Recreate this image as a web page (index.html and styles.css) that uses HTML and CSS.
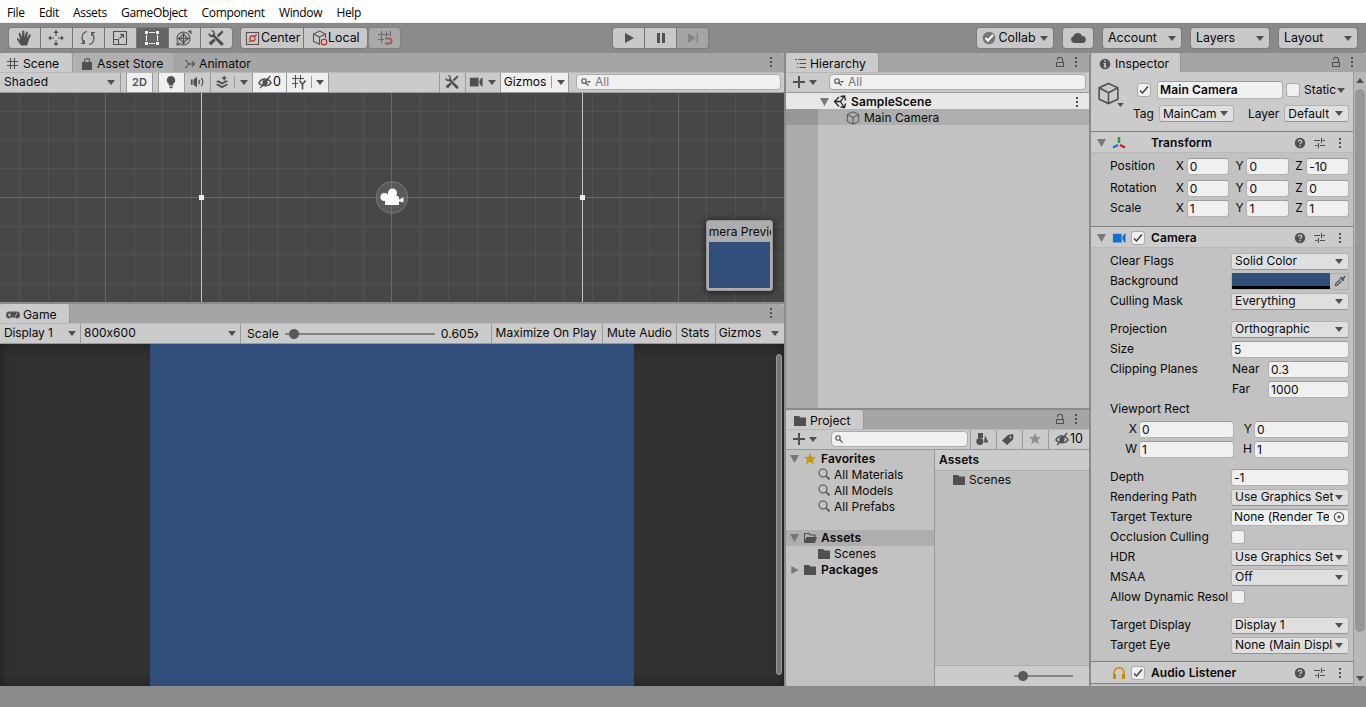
FILE: index.html
```
<!DOCTYPE html>
<html lang="en">
<head>
    <meta charset="UTF-8">
    <meta name="viewport" content="width=device-width, initial-scale=1.0">
    <title>SampleScene - Unity Editor</title>
    <link rel="stylesheet" href="styles.css">
</head>
<body>
    <!-- Icons -->
    <svg class="sprite">
        <symbol id="hand" viewBox="0 0 16 16"><path d="M5 15.500 1 9.500c-.6-1 .8-1.800 1.600-.8L4.200 10.500 2.800 4c-.2-1.300 1.500-1.600 1.900-.3L6 7.500 6.200 1.500c0-1.400 2-1.400 2.100 0l.3 5.500L9.900 2.200c.3-1.300 2.100-.9 1.900.5L11 8l2-3.300c.7-1.100 2.100-.3 1.600 1L12.500 11c-.4 1.600-.8 3-1.500 4.500z"/></symbol>
        <symbol id="move" viewBox="0 0 16 16"><path d="M8 0l2.500 3H5.500zM8 16l2.500-3H5.500zM0 8l3-2.500v5zM16 8l-3-2.500v5z"/><path class="ln" d="M8 3v3M8 10v3M3 8h3M10 8h3"/></symbol>
        <symbol id="rotate" viewBox="0 0 16 16"><path class="ln" d="M7 1.500C2 2.500.500 8.500 3.800 13.200M1 13.500h3.300v-3.500M9 14.500c5-1 6.500-7 3.200-11.700M15 2.500h-3.300V6"/></symbol>
        <symbol id="scale" viewBox="0 0 16 16"><path class="ln" d="M1.500 1.500h13v13h-13zM1.500 9.500h5v5M7.500 8.500l4-4M8 4.500h3.500V8"/></symbol>
        <symbol id="rect" viewBox="0 0 16 16"><path d="M1 1h3v3H1zM12 1h3v3h-3zM1 12h3v3H1zM12 12h3v3h-3z"/><path class="ln" d="M5 2.500h6M5 13.500h6M2.500 5v6M13.500 5v6"/></symbol>
        <symbol id="trans" viewBox="0 0 16 16"><circle class="ln" cx="7.500" cy="8.500" r="6.500"/><path class="ln" d="M7.500 3v11M2 8.500h11M5 6h5v5H5z"/><path d="M7.500 2.500l2 2.500h-4zM7.500 14.500l2-2.500h-4zM1.500 8.500l2.500-2v4zM13.500 8.500l-2.500-2v4zM11.500.500h4v4zM.500 12v3.500H4z"/></symbol>
        <symbol id="tools" viewBox="0 0 16 16"><path d="M3 0.500 5.800 3 3.500 5.300.500 3C0 6 2.500 7.800 5.200 7l7.600 8.300c1.600 1 3.400-.8 2.300-2.300L7 5.200C7.500 2 5.500-.2 3 .500z"/><path d="M14 .500l1.500 1.500-4.800 5.200-1.900-1.900zM6 8.500l1.800 1.800-4.600 5.200-2.700-2.700z"/></symbol>
        <symbol id="pivot" viewBox="0 0 16 16"><path class="ln" d="M1.500 1.500h13v13h-13z"/><path class="ln red" d="M4 12l2-2M10 6l2.500-2.500"/><circle class="ln red" cx="8" cy="8" r="2.800"/></symbol>
        <symbol id="cube" viewBox="0 0 16 16"><path class="ln" d="M8 1 14.500 4v8L8 15 1.500 12V4zM1.500 4 8 7.500 14.500 4M8 7.500V15"/></symbol>
        <symbol id="local" viewBox="0 0 16 16"><path class="ln" d="M8 14.500 1.500 11.500V4L7.500 1 13.500 4v4M1.500 4l6 3 6-3M7.500 7v7"/><circle class="ln red" cx="12" cy="12" r="2.800"/></symbol>
        <symbol id="snap" viewBox="0 0 16 16"><path class="ln" d="M4.500 1v12M9.500 1v6M1 4.500h13M1 9.500h6M13.500 1v5"/><path class="magnet" d="M8 8.500h4a2.500 2.500 0 0 1 0 5H8"/></symbol>
        <symbol id="gridy" viewBox="0 0 16 16"><path class="ln" d="M4.500 1v13M9.500 1v5M1 4.500h12M1 9.500h6"/><path class="ln bold" d="M8.500 6.500l3 4 3-4M11.500 10.500v5"/></symbol>
        <symbol id="grid" viewBox="0 0 12 12"><path class="ln" d="M3.500 0v11M7.500 0v11M0 3.500h11M0 7.500h11"/></symbol>
        <symbol id="bag" viewBox="0 0 12 12"><path d="M1 4h10v8H1z"/><path class="ln" d="M3.500 5V2.500c0-2.500 5-2.500 5 0V5"/></symbol>
        <symbol id="anim" viewBox="0 0 12 12"><path class="ln" d="M1 2c2 0 2 4 5 4h5M1 10c2 0 2-4 5-4M8 3.500 10.500 6 8 8.500"/></symbol>
        <symbol id="bulb" viewBox="0 0 16 16"><path d="M8 1a4.800 4.800 0 0 0-2.600 8.800V12h5.200V9.800A4.800 4.800 0 0 0 8 1zM6 13h4v1l-1 1H7l-1-1z"/></symbol>
        <symbol id="sound" viewBox="0 0 16 16"><path d="M1 5h2v6H1zM4 5l4-3v12l-4-3z"/><path class="ln bold" d="M10 5.500c1 1.500 1 3.500 0 5M13 3.500c2 2.500 2 6.500 0 9"/></symbol>
        <symbol id="fx" viewBox="0 0 16 16"><path d="M1 7.500 4 6l4 2.500 5-2.500 2 1-7 3.800zM1 11l2-1 5 2.500 5.500-2.500 1.500 1-7 4zM10.500 0l1 2.500 2.500 1-2.500 1-1 2.500-1-2.500-2.500-1 2.500-1z"/></symbol>
        <symbol id="eye" viewBox="0 0 16 16"><path class="ln bold" d="M1 9c3-6 11-6 14 0-3 4.500-11 4.500-14 0zM2.500 15 14 1"/><circle cx="8" cy="8.500" r="3"/></symbol>
        <symbol id="cam" viewBox="0 0 16 16"><path d="M1 3h10v10H1zM12 6l2.500-3h1v10h-1L12 10z"/></symbol>
        <symbol id="down" viewBox="0 0 8 5"><path d="M0 0h8L4 5z"/></symbol>
        <symbol id="fold" viewBox="0 0 9 8"><path d="M0 0h9L4.500 8z"/></symbol>
        <symbol id="right" viewBox="0 0 9 9"><path d="M1 0v9l8-4.500z"/></symbol>
        <symbol id="dots" viewBox="0 0 4 12"><path d="M1 1h2v2H1zM1 5h2v2H1zM1 9h2v2H1z"/></symbol>
        <symbol id="lock" viewBox="0 0 10 12"><path class="ln" d="M1.500 6.500h7v4h-7zM2.500 4V3.500c0-3 5-3 5 0v3"/></symbol>
        <symbol id="search" viewBox="0 0 12 12"><circle class="ln" cx="5" cy="5" r="4"/><path class="ln bold" d="M8 8l3.500 3.500"/></symbol>
        <symbol id="lens" viewBox="0 0 8 8"><circle class="ln" cx="3" cy="3" r="2.200"/><path class="ln" d="M4.500 4.500l3 3"/></symbol>
        <symbol id="searchd" viewBox="0 0 12 10"><circle class="ln" cx="4" cy="4" r="2.300"/><path class="ln" d="M5.500 5.500l3 3"/><path d="M7 4h4L9 6z"/></symbol>
        <symbol id="play" viewBox="0 0 16 16"><path d="M4 3v10l9-5z"/></symbol>
        <symbol id="pause" viewBox="0 0 16 16"><path d="M4 3h3v10H4zM9 3h3v10H9z"/></symbol>
        <symbol id="step" viewBox="0 0 16 16"><path d="M3 3v10l7.500-5zM11.500 3H13v10h-1.500z"/></symbol>
        <symbol id="check" viewBox="0 0 12 12"><path class="tick" d="M2 6.500 4.500 9 10 2.500"/></symbol>
        <symbol id="collab" viewBox="0 0 14 14"><circle cx="7" cy="7" r="6.300" fill="#777"/><path d="M3.500 7 6 9.500 11 4" fill="none" stroke="#fff" stroke-width="2"/></symbol>
        <symbol id="cloud" viewBox="0 0 16 12"><path d="M4 11a3.500 3.500 0 0 1-.5-6.800A4.500 4.500 0 0 1 12 4a3.500 3.500 0 0 1 .5 7z"/></symbol>
        <symbol id="list" viewBox="0 0 12 12"><path class="ln" d="M0 1.500h2M3.500 1.500H11M2 5.500h1M4.500 5.500H11M2 9.500h1M4.500 9.500H11"/></symbol>
        <symbol id="plus" viewBox="0 0 12 12"><path d="M5 0h2v5h5v2H7v5H5V7H0V5h5z"/></symbol>
        <symbol id="unity" viewBox="0 0 14 14"><path class="ln dark" d="M6 2 1.500 6.500 6 11.500M1.500 6.500h6M7.500 1.500l4-.5 1 4.500M7.500 12l4 .5 1-4M11 1.500l-3.500 5L11 12"/></symbol>
        <symbol id="info" viewBox="0 0 12 12"><circle cx="6" cy="6" r="5.300"/><path d="M5.200 2.200h1.700v1.600H5.200zM4.500 5h2.400v3.500h.8v1H4.500v-1h.7V6h-.7z" fill="#cbcbcb"/></symbol>
        <symbol id="help" viewBox="0 0 12 12"><circle cx="6" cy="6" r="5.200"/><path d="M4.300 4.700c0-2.200 3.500-2 3.500 0C7.800 5.800 6 5.800 6 7.200M6 8.200v1.300" fill="none" stroke="#cbcbcb" stroke-width="1.300"/></symbol>
        <symbol id="preset" viewBox="0 0 12 12"><path class="ln" d="M0 3.500h6M8.500 3.500H11M7.500 1v5M1 8.500h2.500M6 8.500h5M4.500 6v5"/></symbol>
        <symbol id="axes" viewBox="0 0 14 14"><path d="M7 1v6" stroke="#2e9637" stroke-width="2.500"/><path d="M6 9 1 11.500" stroke="#1573e6" stroke-width="2.500"/><path d="M8 9l5 2.500" stroke="#d11919" stroke-width="2.500"/></symbol>
        <symbol id="phones" viewBox="0 0 14 14"><path d="M2 12V7c0-7 10-7 10 0v5" fill="none" stroke="#c98a00" stroke-width="1.500"/><path d="M1 8h3v5H1zM10 8h3v5h-3z" fill="#c98a00"/></symbol>
        <symbol id="pick" viewBox="0 0 12 12"><path d="M7 1.500 8.500 3 10 1c1-.8 2 .5 1.300 1.200L9.500 4l1 1-1.500 1.300L5.800 3z"/><path class="ln" d="M6 4.500 1.500 9v1.500H3L7.500 6"/></symbol>
        <symbol id="target" viewBox="0 0 12 12"><circle class="ln" cx="6" cy="6" r="4.700"/><circle cx="6" cy="6" r="1.500"/></symbol>
        <symbol id="folder" viewBox="0 0 14 12"><path d="M1 1h5l1.500 1.500H13v8.500H1z"/></symbol>
        <symbol id="folder-open" viewBox="0 0 14 12"><path class="ln" d="M1.500 10V1.500H6L7.500 3H12v2"/><path d="M3.500 5H14l-2 6H1z"/></symbol>
        <symbol id="star" viewBox="0 0 12 12"><path d="M6 0l1.700 4H12L8.700 6.800 9.900 11.500 6 8.800 2.100 11.500 3.300 6.800 0 4h4.300z"/></symbol>
        <symbol id="shapes" viewBox="0 0 14 14"><path d="M3 1h5v5H3zM10 3.500l3.500 7H9z"/><circle cx="4.800" cy="9.500" r="3.500"/></symbol>
        <symbol id="tag" viewBox="0 0 12 12"><path fill-rule="evenodd" d="M6 2l4.500-1 1 1L11 6.500 5 12 0 7.500zM8.300 3.200a1 1 0 1 0 .1 0z"/></symbol>
        <symbol id="pad" viewBox="0 0 14 8"><path fill-rule="evenodd" d="M3.500.500h7a3.500 3.500 0 0 1 0 7L9 6.500H5L3.500 7.500a3.500 3.500 0 0 1 0-7zM3 2.500v1H2v1h1v1h1v-1h1v-1H4v-1zM11 2h-1v1.500h1zM10 4.500H9v1h1z"/></symbol>
        <symbol id="movie" viewBox="0 0 24 18"><circle cx="4.500" cy="9" r="4"/><circle cx="12.500" cy="5" r="4.500"/><path d="M4 9h1l4-3 9 2 1 2v7H5v-3.500zM18 12l5.500-2.500v5L18 13z"/></symbol>
    </svg>

    <nav class="menu">
        <span>File</span><span>Edit</span><span>Assets</span><span>GameObject</span><span>Component</span><span>Window</span><span>Help</span>
    </nav>

    <header class="toolbar">
        <div class="btn-group tools">
            <button><svg><use href="#hand"/></svg></button>
            <button><svg><use href="#move"/></svg></button>
            <button><svg><use href="#rotate"/></svg></button>
            <button><svg><use href="#scale"/></svg></button>
            <button class="selected"><svg><use href="#rect"/></svg></button>
            <button><svg><use href="#trans"/></svg></button>
            <button><svg><use href="#tools"/></svg></button>
        </div>
        <div class="btn-group handles">
            <button><svg><use href="#pivot"/></svg>Center</button>
            <button><svg><use href="#local"/></svg>Local</button>
        </div>
        <div class="btn-group disabled"><button><svg><use href="#snap"/></svg></button></div>
        <div class="btn-group player">
            <button><svg><use href="#play"/></svg></button>
            <button><svg><use href="#pause"/></svg></button>
            <button class="off"><svg><use href="#step"/></svg></button>
        </div>
        <div class="account">
            <button class="collab"><svg class="s14"><use href="#collab"/></svg>Collab<svg class="arrow"><use href="#down"/></svg></button>
            <button class="cloud"><svg><use href="#cloud"/></svg></button>
            <button class="drop">Account<svg class="arrow"><use href="#down"/></svg></button>
            <button class="drop">Layers<svg class="arrow"><use href="#down"/></svg></button>
            <button class="drop">Layout<svg class="arrow"><use href="#down"/></svg></button>
        </div>
    </header>

    <main class="editor">
        <div class="column left">
            <!-- Scene -->
            <section class="panel scene">
                <div class="tabs">
                    <div class="tab active tab-scene"><svg class="s12"><use href="#grid"/></svg>Scene</div>
                    <div class="tab tab-store"><svg class="s12"><use href="#bag"/></svg>Asset Store</div>
                    <div class="tab tab-anim"><svg class="s12"><use href="#anim"/></svg>Animator</div>
                    <div class="tab-tools"><svg class="dots"><use href="#dots"/></svg></div>
                </div>
                <div class="bar">
                    <div class="cell shaded">Shaded<svg class="arrow"><use href="#down"/></svg></div>
                    <div class="cell on two-d">2D</div>
                    <div class="cell on light"><svg class="s14"><use href="#bulb"/></svg></div>
                    <div class="cell audio"><svg class="s14"><use href="#sound"/></svg></div>
                    <div class="cell effects"><svg class="s14"><use href="#fx"/></svg><i></i><svg class="arrow"><use href="#down"/></svg></div>
                    <div class="cell on hidden-count"><svg class="s14"><use href="#eye"/></svg>0</div>
                    <div class="cell on grid-axis"><svg><use href="#gridy"/></svg><i></i><svg class="arrow"><use href="#down"/></svg></div>
                    <div class="cell scene-tools"><svg class="s14"><use href="#tools"/></svg></div>
                    <div class="cell scene-cam"><svg class="s14"><use href="#cam"/></svg><svg class="arrow"><use href="#down"/></svg></div>
                    <div class="cell on gizmos">Gizmos<i></i><svg class="arrow"><use href="#down"/></svg></div>
                    <div class="search"><svg class="lens"><use href="#searchd"/></svg>All</div>
                </div>
                <div class="scene-view">
                    <svg class="scene-grid" viewBox="0 0 784 209">
                        <!-- minor lines, then every tenth line -->
                        <path d="M19.500 0v209M48.500 0v209M76.500 0v209M134.500 0v209M162.500 0v209M191.500 0v209M219.500 0v209M248.500 0v209M277.500 0v209M305.500 0v209M334.500 0v209M363.500 0v209M420.500 0v209M448.500 0v209M477.500 0v209M506.500 0v209M535.500 0v209M563.500 0v209M592.500 0v209M620.500 0v209M649.500 0v209M706.500 0v209M735.500 0v209M764.500 0v209M0 18.500h784M0 47.500h784M0 75.500h784M0 133.500h784M0 161.500h784M0 190.500h784" stroke="#525252" fill="none"/>
                        <path d="M105.500 0v209M391.500 0v209M678.500 0v209M0 104.500h784" stroke="#6a6a6a" fill="none"/>
                        <path d="M201.500 0v209M582.500 0v209" stroke="#c4c4c4" fill="none"/>
                        <path d="M199 102h5v5h-5zM580 102h5v5h-5z" fill="#eee"/>
                        <circle cx="392" cy="104.500" r="15.800" fill="#888" fill-opacity=".3" stroke="#777"/>
                        <use href="#movie" x="380" y="95" width="24" height="18" fill="#fff"/>
                    </svg>
                    <div class="preview"><div class="preview-title"><span>Camera Preview</span></div><div class="preview-image"></div></div>
                </div>
            </section>

            <!-- Game -->
            <section class="panel game">
                <div class="tabs">
                    <div class="tab active tab-game"><svg class="pad"><use href="#pad"/></svg>Game</div>
                    <div class="tab-tools"><svg class="dots"><use href="#dots"/></svg></div>
                </div>
                <div class="bar">
                    <div class="cell display">Display 1<svg class="arrow"><use href="#down"/></svg></div>
                    <div class="cell size">800x600<svg class="arrow"><use href="#down"/></svg></div>
                    <div class="cell zoom">Scale<div class="slider"></div><span>0.605x</span></div>
                    <div class="cell maximize">Maximize On Play</div>
                    <div class="cell mute">Mute Audio</div>
                    <div class="cell stats">Stats</div>
                    <div class="cell game-gizmos">Gizmos<i></i><svg class="arrow"><use href="#down"/></svg></div>
                </div>
                <div class="game-view"><div class="game-image"></div><div class="game-scroll"></div></div>
            </section>
        </div>

        <div class="column middle">
            <!-- Hierarchy -->
            <section class="panel hierarchy">
                <div class="tabs">
                    <div class="tab active tab-hierarchy"><svg class="s12"><use href="#list"/></svg>Hierarchy</div>
                    <div class="tab-tools"><svg class="lock"><use href="#lock"/></svg><svg class="dots"><use href="#dots"/></svg></div>
                </div>
                <div class="bar">
                    <div class="add"><svg class="s12"><use href="#plus"/></svg><svg class="arrow"><use href="#down"/></svg></div>
                    <div class="search"><svg class="lens"><use href="#searchd"/></svg>All</div>
                </div>
                <div class="hierarchy-body">
                    <div class="row scene-row"><svg class="fold"><use href="#fold"/></svg><svg class="s14"><use href="#unity"/></svg><b>SampleScene</b><svg class="dots"><use href="#dots"/></svg></div>
                    <div class="row object-row"><svg class="s14"><use href="#cube"/></svg>Main Camera</div>
                </div>
            </section>

            <!-- Project -->
            <section class="panel project">
                <div class="tabs">
                    <div class="tab active tab-project"><svg class="s14"><use href="#folder"/></svg>Project</div>
                    <div class="tab-tools"><svg class="lock"><use href="#lock"/></svg><svg class="dots"><use href="#dots"/></svg></div>
                </div>
                <div class="bar">
                    <div class="add"><svg class="s12"><use href="#plus"/></svg><svg class="arrow"><use href="#down"/></svg></div>
                    <div class="search"><svg class="s8"><use href="#lens"/></svg></div>
                    <div class="cell filter"><svg class="s14"><use href="#shapes"/></svg></div>
                    <div class="cell filter"><svg class="s12"><use href="#tag"/></svg></div>
                    <div class="cell filter faded"><svg class="s12"><use href="#star"/></svg></div>
                    <div class="cell hidden-packages"><svg class="s14"><use href="#eye"/></svg>10</div>
                </div>
                <div class="project-body">
                    <div class="tree">
                        <div class="row"><svg class="fold"><use href="#fold"/></svg><svg class="s12 gold"><use href="#star"/></svg><b>Favorites</b></div>
                        <div class="row child"><svg class="s12"><use href="#search"/></svg>All Materials</div>
                        <div class="row child"><svg class="s12"><use href="#search"/></svg>All Models</div>
                        <div class="row child"><svg class="s12"><use href="#search"/></svg>All Prefabs</div>
                        <div class="row current"><svg class="fold"><use href="#fold"/></svg><svg class="s14"><use href="#folder-open"/></svg><b>Assets</b></div>
                        <div class="row child"><svg class="s14"><use href="#folder"/></svg>Scenes</div>
                        <div class="row"><svg class="fold"><use href="#right"/></svg><svg class="s14"><use href="#folder"/></svg><b>Packages</b></div>
                    </div>
                    <div class="files">
                        <div class="path"><b>Assets</b></div>
                        <div class="row file"><svg class="s14"><use href="#folder"/></svg>Scenes</div>
                        <div class="files-footer"><div class="slider"></div></div>
                    </div>
                </div>
            </section>
        </div>

        <!-- Inspector -->
        <section class="panel inspector">
            <div class="tabs">
                <div class="tab active tab-inspector"><svg class="s12"><use href="#info"/></svg>Inspector</div>
                <div class="tab-tools"><svg class="lock"><use href="#lock"/></svg><svg class="dots"><use href="#dots"/></svg></div>
            </div>
            <div class="inspector-body">
                <div class="inspector-content">
                    <div class="object-head">
                        <div class="object-icon"><svg><use href="#cube"/></svg><svg class="arrow"><use href="#down"/></svg></div>
                        <div class="object-info">
                            <div class="object-name"><span class="checkbox"><svg class="s12"><use href="#check"/></svg></span><b class="input">Main Camera</b><span class="checkbox"></span><label>Static</label><svg class="arrow"><use href="#down"/></svg></div>
                            <div class="object-tags"><label>Tag</label><div class="select tag"><span>MainCamera</span><svg class="arrow"><use href="#down"/></svg></div><label class="layer-label">Layer</label><div class="select layer"><span>Default</span><svg class="arrow"><use href="#down"/></svg></div></div>
                        </div>
                    </div>

                    <div class="component-title"><svg class="fold"><use href="#fold"/></svg><svg class="s14"><use href="#axes"/></svg><span class="gap"></span><b>Transform</b><svg class="s12"><use href="#help"/></svg><svg class="s12"><use href="#preset"/></svg><svg class="dots"><use href="#dots"/></svg></div>
                    <div class="fields transform">
                        <div class="vector"><label>Position</label><em>X</em><span class="input">0</span><em>Y</em><span class="input">0</span><em>Z</em><span class="input">-10</span></div>
                        <div class="vector rotation"><label>Rotation</label><em>X</em><span class="input">0</span><em>Y</em><span class="input">0</span><em>Z</em><span class="input">0</span></div>
                        <div class="vector"><label>Scale</label><em>X</em><span class="input">1</span><em>Y</em><span class="input">1</span><em>Z</em><span class="input">1</span></div>
                    </div>

                    <div class="component-title"><svg class="fold"><use href="#fold"/></svg><svg class="s14 blue"><use href="#cam"/></svg><span class="checkbox"><svg class="s12"><use href="#check"/></svg></span><b>Camera</b><svg class="s12"><use href="#help"/></svg><svg class="s12"><use href="#preset"/></svg><svg class="dots"><use href="#dots"/></svg></div>
                    <div class="fields camera">
                        <div class="field"><label>Clear Flags</label><div class="select"><span>Solid Color</span><svg class="arrow"><use href="#down"/></svg></div></div>
                        <div class="field"><label>Background</label><div class="color"><div class="swatch"></div><svg class="s12"><use href="#pick"/></svg></div></div>
                        <div class="field"><label>Culling Mask</label><div class="select"><span>Everything</span><svg class="arrow"><use href="#down"/></svg></div></div>
                        <div class="field space"><label>Projection</label><div class="select"><span>Orthographic</span><svg class="arrow"><use href="#down"/></svg></div></div>
                        <div class="field"><label>Size</label><div class="input">5</div></div>
                        <div class="field"><label>Clipping Planes</label><em>Near</em><div class="input">0.3</div></div>
                        <div class="field"><label></label><em>Far</em><div class="input">1000</div></div>
                        <div class="field"><label>Viewport Rect</label></div>
                        <div class="field viewport"><em>X</em><div class="input">0</div><em>Y</em><div class="input">0</div></div>
                        <div class="field viewport"><em>W</em><div class="input">1</div><em>H</em><div class="input">1</div></div>
                        <div class="field space"><label>Depth</label><div class="input">-1</div></div>
                        <div class="field"><label>Rendering Path</label><div class="select"><span>Use Graphics Settings</span><svg class="arrow"><use href="#down"/></svg></div></div>
                        <div class="field"><label>Target Texture</label><div class="input object"><span>None (Render Texture)</span><svg class="s12"><use href="#target"/></svg></div></div>
                        <div class="field"><label>Occlusion Culling</label><span class="checkbox"></span></div>
                        <div class="field"><label>HDR</label><div class="select"><span>Use Graphics Settings</span><svg class="arrow"><use href="#down"/></svg></div></div>
                        <div class="field"><label>MSAA</label><div class="select"><span>Off</span><svg class="arrow"><use href="#down"/></svg></div></div>
                        <div class="field"><label>Allow Dynamic Resolution</label><span class="checkbox"></span></div>
                        <div class="field space"><label>Target Display</label><div class="select"><span>Display 1</span><svg class="arrow"><use href="#down"/></svg></div></div>
                        <div class="field"><label>Target Eye</label><div class="select"><span>None (Main Display)</span><svg class="arrow"><use href="#down"/></svg></div></div>
                    </div>

                    <div class="component-title last"><span class="fold"></span><svg class="s14"><use href="#phones"/></svg><span class="checkbox"><svg class="s12"><use href="#check"/></svg></span><b>Audio Listener</b><svg class="s12"><use href="#help"/></svg><svg class="s12"><use href="#preset"/></svg><svg class="dots"><use href="#dots"/></svg></div>
                </div>
                <div class="scrollbar"><svg class="arrow up"><use href="#down"/></svg><div class="thumb"></div><svg class="arrow"><use href="#down"/></svg></div>
            </div>
        </section>
    </main>
    <footer class="status"></footer>
</body>
</html>
```
FILE: styles.css
```
/* General */
* {
    margin: 0;
    padding: 0;
    box-sizing: border-box;
}
body {
    width: 1366px;
    height: 707px;
    overflow: hidden;
    display: flex;
    flex-direction: column;
    background-color: #8a8a8a;
    color: #090909;
    font-family: Inter, "Liberation Sans", sans-serif;
    font-size: 12px;
    font-feature-settings: "calt" 0;
    line-height: 16px;
    white-space: nowrap;
}
button {
    font: inherit;
    font-size: 12.4px;
    color: inherit;
    border: none;
}
em {
    font-style: normal;
}
b {
    font-weight: 600;
    letter-spacing: 0.1px;
}
svg {
    width: 16px;
    height: 16px;
    flex: none;
    fill: #505050;
    color: #505050;
}
.sprite {
    position: absolute;
    width: 0;
    height: 0;
}
.ln {
    fill: none;
    stroke: currentColor;
    stroke-width: 1.1;
}
.bold {
    stroke-width: 1.6;
}
.dark {
    stroke: #222;
    stroke-width: 1.3;
}
.red {
    stroke: #c42020;
}
.magnet {
    fill: none;
    stroke: #b83030;
    stroke-width: 2;
}
.tick {
    fill: none;
    stroke: #404040;
    stroke-width: 1.5;
}
.s8 { width: 8px; height: 8px; }
.s12 { width: 12px; height: 12px; }
.s14 { width: 14px; height: 14px; }
.arrow { width: 8px; height: 5px; }
.dots { width: 4px; height: 12px; }
.lock { width: 10px; height: 12px; }
.lens { width: 12px; height: 10px; }
.pad { width: 14px; height: 8px; }
.gold { fill: #c99700; }
.blue { fill: #1070d0; }

/* Menu */
.menu {
    height: 23px;
    padding: 4px 7px 0;
    display: flex;
    gap: 14.3px;
    background-color: #fff;
    border-bottom: 1px solid #f0f0f0;
    color: #000;
    font-family: "Open Sans", sans-serif;
    letter-spacing: -0.35px;
    line-height: 17px;
}

/* Toolbar */
.toolbar {
    height: 30px;
    padding: 5px 9px 0;
    display: flex;
    align-items: flex-start;
}
.toolbar button {
    height: 20px;
    display: flex;
    align-items: center;
    justify-content: center;
    background-color: #c8c8c8;
}
.btn-group {
    display: flex;
    gap: 1px;
    border-radius: 3px;
    overflow: hidden;
    background-color: #777;
    box-shadow: 0 0 0 1px #7d7d7d;
}
.btn-group button {
    width: 31px;
}
.tools button {
    padding-right: 1px;
}
.tools {
    margin-right: 9px;
}
.tools .selected {
    background-color: #656565;
}
.selected svg {
    fill: #f0f0f0;
    color: #f0f0f0;
}
.handles {
    margin-right: 2px;
}
.handles button {
    width: 62px;
    justify-content: flex-start;
    padding-left: 4px;
}
.handles button:first-child svg {
    width: 15px;
    height: 15px;
    margin-right: 1px;
}
.handles button + button {
    width: 63px;
    padding-left: 8px;
}
.disabled {
    opacity: 0.5;
}
.player {
    margin-left: 213px;
}
.player .off {
    background-color: #a5a5a5;
}
.off svg {
    fill: #858585;
}
.account {
    display: flex;
    gap: 10px;
    margin-left: auto;
}
.account button {
    border-radius: 3px;
    box-shadow: 0 0 0 1px #7d7d7d;
}
.account .collab {
    width: 76px;
    gap: 2px;
}
.collab .arrow {
    margin-left: 2px;
}
.cloud {
    width: 30px;
}
.cloud svg {
    height: 12px;
}
.account .drop {
    width: 78px;
    padding: 0 5px;
    justify-content: space-between;
}

/* Panels */
.editor {
    height: 633px;
    display: flex;
    gap: 2px;
}
.column {
    display: flex;
    flex-direction: column;
    gap: 2px;
}
.left { width: 784px; }
.middle { width: 303px; }
.panel {
    display: flex;
    flex-direction: column;
    background-color: #c2c2c2;
    min-height: 0;
}
.tabs {
    height: 19px;
    flex: none;
    display: flex;
    background-color: #a5a5a5;
    border-radius: 3px 3px 0 0;
}
.tab {
    display: flex;
    align-items: center;
    gap: 4px;
    padding: 2px 0 0 7px;
    height: 19px;
    background-color: #b0b0b0;
    border-radius: 3px 3px 0 0;
    border-right: 1px solid #999;
    font-size: 12.2px;
}
.tab.active {
    background-color: #cbcbcb;
}
.tab-scene { width: 73px; }
.tab-store { width: 102px; padding-left: 8px; }
.tab-anim { background: none; border: none; padding-left: 9px; gap: 3px; }
.tab-game { width: 70px; gap: 3px; padding-left: 6px; }
.tab-hierarchy { width: 93px; padding-left: 9px; gap: 3px; }
.tab-project { width: 78px; gap: 3px; }
.tab-inspector { width: 90px; padding-left: 8px; }
.tab-tools {
    margin-left: auto;
    padding: 3px 11px 0;
    display: flex;
    gap: 9px;
}
.inspector .tab-tools {
    padding-right: 12px;
}
.bar {
    height: 21px;
    flex: none;
    display: flex;
    background-color: #cbcbcb;
    border-top: 1px solid #b9b9b9;
    border-bottom: 1px solid #999;
}
.cell {
    display: flex;
    align-items: center;
    justify-content: center;
    padding-bottom: 1px;
    border-right: 1px solid #999;
}
.cell i {
    width: 1px;
    height: 12px;
    background-color: #999;
}
.cell.on {
    background-color: #efefef;
}
.search {
    display: flex;
    align-items: center;
    height: 16px;
    margin-top: 1px;
    padding-left: 3px;
    gap: 3px;
    background-color: #f0f0f0;
    border: 1px solid #aaa;
    border-radius: 4px;
    color: #777;
}
.add {
    display: flex;
    align-items: center;
    gap: 4px;
    padding: 0 0 1px 7px;
    width: 43px;
}

/* Scene */
.scene {
    height: 249px;
}
.shaded {
    width: 121px;
    padding: 0 5px 1px 4px;
    justify-content: space-between;
    letter-spacing: 0.15px;
}
.two-d {
    width: 27px;
    margin: 0 5px;
    border-left: 1px solid #999;
    color: #505050;
    font-size: 11px;
    font-weight: 600;
}
.light { width: 27px; border-left: 1px solid #999; padding-right: 1px; }
.audio { width: 26px; padding-right: 1px; }
.effects { width: 42px; gap: 5px; }
.hidden-count { width: 34px; gap: 1px; font-size: 12.5px; }
.grid-axis { width: 42px; gap: 4px; padding-right: 1px; }
.scene-tools { width: 27px; margin-left: auto; border-left: 1px solid #999; padding-right: 1px; }
.scene-cam { width: 35px; gap: 5px; padding-right: 1px; }
.gizmos { width: 68px; gap: 5px; }
.scene .search {
    width: 205px;
    margin-left: 7px;
    margin-right: 3px;
}
.scene-view {
    position: relative;
    height: 209px;
    background-color: #474747;
    overflow: hidden;
}
.scene-grid {
    display: block;
    width: 784px;
    height: 209px;
}
.preview {
    position: absolute;
    left: 706px;
    top: 127px;
    width: 67px;
    height: 71px;
    padding: 2px;
    background-color: #adadad;
    border: 1px solid #999;
    border-radius: 3px;
    box-shadow: 0 1px 6px 1px rgba(0, 0, 0, 0.5);
}
.preview-title {
    height: 19px;
    margin: 0 -1px;
    display: flex;
    justify-content: center;
    overflow: hidden;
    line-height: 17px;
}
.preview-image {
    height: 46px;
    background-color: #314d79;
}

/* Game */
.game {
    flex: 1;
}
.game .cell {
    padding: 0 4px 1px;
}
.display, .size {
    justify-content: space-between;
}
.display { width: 81px; letter-spacing: -0.1px; }
.size { width: 160px; }
.game .size { padding-left: 3px; }
.game .zoom { width: 251px; padding: 1px 0 0 6px; justify-content: flex-start; font-size: 12.2px; }
.zoom span {
    width: 37px;
    overflow: hidden;
}
.zoom .slider {
    width: 150px;
    margin: 0 6px;
}
.slider {
    height: 10px;
    background: radial-gradient(circle at 9px 5px, #5a5a5a 4.500px, transparent 5.500px), linear-gradient(transparent 4px, #858585 4px, #858585 6px, transparent 6px);
}
.game .maximize { width: 111px; padding-right: 6px; }
.mute { width: 74px; }
.game .stats { width: 39px; padding-right: 6px; }
.game .game-gizmos { width: 68px; border: none; gap: 5px; padding-right: 6px; }
.game-view {
    position: relative;
    flex: 1;
    background-color: #313131;
    box-shadow: inset 0 0 12px #1c1c1c;
}
.game-image {
    width: 484px;
    height: 100%;
    margin-left: 150px;
    background-color: #314d79;
}
.game-scroll {
    position: absolute;
    right: 2px;
    top: 10px;
    width: 6px;
    height: 321px;
    background-color: #777;
    border: 1px solid #999;
    border-radius: 3px;
}

/* Hierarchy */
.hierarchy {
    height: 355px;
}
.hierarchy .search {
    width: 257px;
}
.hierarchy-body {
    flex: 1;
    background: linear-gradient(90deg, #ababab 32px, #c2c2c2 32px);
}
.row {
    display: flex;
    align-items: center;
    height: 16px;
}
.fold {
    width: 9px;
    height: 8px;
    fill: #777;
}
.scene-row {
    padding: 1px 10px 0 34px;
    background-color: #e8e8e8;
}
.scene-row .s14 {
    margin: 0 4px 0 4px;
}
.scene-row .dots {
    margin-left: auto;
}
.object-row {
    padding: 1px 0 0 60px;
    gap: 4px;
    background: linear-gradient(90deg, #989898 32px, #aeaeae 32px);
}

/* Project */
.project {
    flex: 1;
}
.project .search {
    width: 137px;
    margin: 1px 2px 0 2px;
}
.filter {
    width: 26px;
    border-left: 1px solid #999;
    border-right: none;
    padding-right: 3px;
}
.faded {
    padding-right: 1px;
}
.faded svg {
    fill: #909090;
}
.hidden-packages {
    flex: 1;
    border-left: 1px solid #999;
    border-right: none;
    gap: 1px;
    font-size: 12.5px;
}
.project-body {
    flex: 1;
    display: flex;
}
.tree {
    width: 149px;
    padding-top: 1px;
    border-right: 1px solid #999;
}
.tree .row {
    padding-left: 4px;
}
.tree .row .fold {
    margin-right: 4px;
}
.tree .row b {
    margin-left: 4px;
}
.tree .s12 {
    margin: 0 1px;
}
.tree .child {
    padding-left: 31px;
    gap: 3px;
}
.tree .child .s12 {
    margin-bottom: 2px;
}
.tree .current {
    margin-top: 15px;
    background-color: #aeaeae;
}
.files {
    flex: 1;
    display: flex;
    flex-direction: column;
    background-color: #bebebe;
}
.path {
    height: 21px;
    padding: 2px 4px;
    background-color: #cbcbcb;
    border-bottom: 1px solid #aaa;
}
.file {
    margin-top: 1px;
    padding-left: 17px;
    gap: 3px;
}
.files-footer {
    height: 21px;
    margin-top: auto;
    padding: 5px 16px 0 79px;
    background-color: #cbcbcb;
    border-top: 1px solid #aaa;
}

/* Inspector */
.inspector {
    width: 275px;
}
.inspector-body {
    flex: 1;
    display: flex;
}
.inspector-content {
    width: 262px;
    background-color: #c2c2c2;
}
.object-head {
    height: 59px;
    display: flex;
    background-color: #cbcbcb;
}
.object-icon {
    width: 42px;
    padding: 10px 0 0 6px;
    display: flex;
    align-items: flex-start;
}
.object-icon svg {
    width: 23px;
    height: 23px;
}
.object-icon .arrow {
    width: 7px;
    height: 4px;
    margin: 21px 0 0 -3px;
}
.object-info {
    width: 217px;
    padding-top: 9px;
}
.object-name {
    display: flex;
    align-items: center;
    padding-left: 4px;
}
.object-name .input {
    width: 126px;
    height: 18px;
    margin: 0 3px 0 6px;
    padding-bottom: 1px;
}
.object-name label {
    margin: 0 1px 0 4px;
}
.object-tags {
    display: flex;
    align-items: center;
    margin-top: 6px;
}
.object-tags .select {
    margin-left: 5px;
}
.object-tags .tag {
    width: 75px;
}
.object-tags .tag span {
    width: 54px;
}
.object-tags .layer {
    width: 65px;
}
.layer-label {
    margin-left: 14px;
}
.component-title {
    height: 22px;
    display: flex;
    align-items: center;
    padding: 1px 11px 0 6px;
    background-color: #cbcbcb;
    border-top: 1px solid #7f7f7f;
    border-bottom: 1px solid #bababa;
}
.component-title .s14 {
    margin: 0 5px 0 6px;
}
.component-title b {
    margin: 0 auto 0 6px;
}
.component-title > .s12 {
    margin-right: 8px;
}
.component-title > .s12 + .s12 {
    margin-right: 12px;
}
.component-title .gap {
    width: 14px;
}
.component-title.last {
    height: 23px;
    padding-top: 0;
    border-bottom-color: #7f7f7f;
}
.input, .select {
    height: 17px;
    display: flex;
    align-items: center;
    background-color: #f0f0f0;
    border: 1px solid #b2b2b2;
    border-top-color: #9c9c9c;
    border-radius: 3px;
    padding: 1px 2px 0;
    overflow: hidden;
}
.select {
    justify-content: space-between;
    padding: 0 5px 0 3px;
    background-color: #dfdfdf;
    border-color: #b2b2b2;
    border-bottom-color: #939393;
}
.select span {
    max-width: 98px;
    overflow: hidden;
}
.checkbox {
    width: 14px;
    height: 14px;
    display: flex;
    align-items: center;
    justify-content: center;
    background-color: #f0f0f0;
    border: 1px solid #aaa;
    border-radius: 3px;
}
.transform {
    height: 73px;
    padding-top: 3px;
}
.vector, .field {
    display: flex;
    align-items: center;
    height: 20px;
    padding: 0 4px 0 19px;
}
.vector label {
    width: 66px;
}
.vector em {
    width: 11px;
}
.vector .input {
    width: 43px;
    margin-right: 6px;
}
.vector .input:last-child {
    margin-right: 0;
}
.rotation {
    margin-top: 2px;
}
.camera {
    height: 413px;
    padding-top: 3px;
}
.field label {
    width: 119px;
    margin-right: 2px;
    overflow: hidden;
}
.field .select, .field .input, .color {
    flex: 1;
    min-width: 0;
}
.field em {
    width: 37px;
    padding-left: 1px;
}
.space {
    margin-top: 8px;
}
.color {
    height: 17px;
    display: flex;
    align-items: center;
    border: 1px solid #b0b0b0;
}
.swatch {
    width: 98px;
    height: 16px;
    margin-right: 4px;
    background-color: #314d79;
    border-bottom: 3px solid #000;
}
.field .object {
    padding: 0 3px 0 2px;
}
.object span {
    width: 96px;
    overflow: hidden;
    margin-right: 4px;
}
.viewport {
    padding-left: 28px;
}
.field.viewport em {
    width: 20px;
    text-align: right;
    padding-right: 2px;
}
.scrollbar {
    width: 13px;
    display: flex;
    flex-direction: column;
    align-items: center;
    padding: 6px 0 5px;
    background-color: #b8b8b8;
    border-left: 1px solid #999;
}
.up {
    transform: rotate(180deg);
}
.thumb {
    width: 10px;
    height: 543px;
    margin: 6px 0 auto;
    background-color: #979797;
    border-radius: 5px;
}

.status {
    flex: 1;
    background-color: #8a8a8a;
}
```
